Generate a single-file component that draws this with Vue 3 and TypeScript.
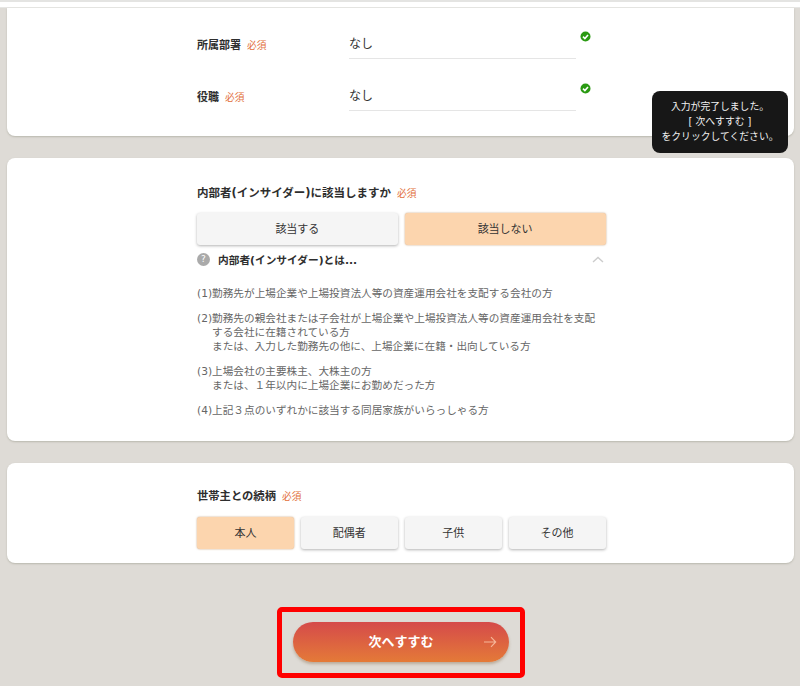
<script setup lang="ts">
const relations: { label: string; on: boolean }[] = [
  { label: '本人', on: true },
  { label: '配偶者', on: false },
  { label: '子供', on: false },
  { label: 'その他', on: false },
]
const fields: string[] = ['所属部署', '役職']
</script>

<template>
  <div class="page">
    <div class="topline"></div>
    <section class="card card-one">
      <div v-for="f in fields" :key="f" class="field">
        <div class="label"><b>{{ f }}</b><span class="req">必須</span></div>
        <div class="value">なし</div>
        <svg class="check" width="11" height="11" viewBox="0 0 11 11">
          <circle cx="5.5" cy="5.5" r="5" fill="#2a9a12" />
          <path d="M3 5.6 4.9 7.5 8 3.9" fill="none" stroke="#fff" stroke-width="1.6" />
        </svg>
      </div>
    </section>

    <div class="tip">入力が完了しました。<br />[ 次へすすむ ]<br />をクリックしてください。</div>

    <section class="card card-two">
      <div class="inner">
        <div class="heading"><b>内部者(インサイダー)に該当しますか</b><span class="req">必須</span></div>
        <div class="choices">
          <button class="choice">該当する</button>
          <button class="choice on">該当しない</button>
        </div>
        <div class="accordion">
          <span class="q">?</span>
          <b>内部者(インサイダー)とは...</b>
          <svg class="chev" width="12" height="7" viewBox="0 0 12 7">
            <path d="M1 6 6 1.5 11 6" fill="none" stroke="#ccc" stroke-width="1.4" />
          </svg>
        </div>
        <ol class="notes">
          <li>(1)勤務先が上場企業や上場投資法人等の資産運用会社を支配する会社の方</li>
          <li>(2)勤務先の親会社または子会社が上場企業や上場投資法人等の資産運用会社を支配<br /><span class="ind">する会社に在籍されている方</span><br /><span class="ind">または、入力した勤務先の他に、上場企業に在籍・出向している方</span></li>
          <li>(3)上場会社の主要株主、大株主の方<br /><span class="ind">または、１年以内に上場企業にお勤めだった方</span></li>
          <li>(4)上記３点のいずれかに該当する同居家族がいらっしゃる方</li>
        </ol>
      </div>
    </section>

    <section class="card card-three">
      <div class="inner">
        <div class="heading"><b>世帯主との続柄</b><span class="req">必須</span></div>
        <div class="choices">
          <button v-for="r in relations" :key="r.label" class="choice" :class="{ on: r.on }">{{ r.label }}</button>
        </div>
      </div>
    </section>

    <div class="cta">
      <div class="frame">
        <button class="next">
          <span>次へすすむ</span>
          <svg class="arrow" width="14" height="12" viewBox="0 0 14 12">
            <path d="M1 6H12.5M8 1.2 12.7 6 8 10.8" fill="none" stroke="#f6b79a" stroke-width="1.1" />
          </svg>
        </button>
      </div>
    </div>
  </div>
</template>

<style>
html, body { margin: 0; background: #dedbd6; }
</style>

<style scoped>
.page {
  position: relative;
  width: 800px;
  height: 686px;
  overflow: hidden;
  background: #dedbd6;
  font-family: "DejaVu Sans", "Noto Sans CJK JP", sans-serif;
  color: #333;
  font-size: 11px;
}
.topline {
  height: 8px;
  box-sizing: border-box;
  background: #fff;
  border-top: 2px solid #e4e4e2;
  border-bottom: 1px solid #e6e6e4;
}
.card {
  margin: 0 6px 0 7px;
  background: #fff;
  border-radius: 0 0 8px 8px;
  box-shadow: 0 1px 2px #b9b8ae;
}
.card-one { height: 128px; box-sizing: border-box; padding-top: 21px; }
.card-two { margin-top: 22px; height: 283px; border-radius: 8px; }
.card-three { margin-top: 22px; height: 100px; border-radius: 8px; }
.inner { width: 408.5px; margin-left: 190px; }
.field {
  position: relative;
  height: 52px;
  margin-left: 190px;
  display: flex;
}
.label { width: 152px; padding-top: 8px; line-height: 18px; }
b { font-weight: 700; color: #2e2e2e; }
.req { color: #e2703a; font-size: 9.7px; margin-left: 6px; font-weight: 400; }
.value {
  width: 227px;
  height: 30px;
  box-sizing: border-box;
  border-bottom: 1px solid #e5e5e5;
  font-size: 12px;
  line-height: 31px;
}
.check { position: absolute; left: 383px; top: 2px; }
.tip {
  position: absolute;
  left: 652px;
  top: 91px;
  width: 136px;
  height: 62px;
  box-sizing: border-box;
  padding-top: 8px;
  background: #171717;
  border-radius: 8px;
  color: #f2f2f2;
  text-align: center;
  font-size: 9.8px;
  line-height: 15px;
}
.heading { padding-top: 26px; line-height: 18px; font-size: 11.5px; }
.choices { display: flex; gap: 7px; margin-top: 10px; }
.card-three .heading { padding-top: 25px; font-size: 11.3px; }
.card-three .choices { margin-top: 11px; }
.choice {
  flex: 1;
  height: 32px;
  padding: 0 0 3px;
  border: 0;
  border-radius: 3px;
  background: #f5f5f5;
  box-shadow: 0 1px 3px rgba(0, 0, 0, 0.3);
  font: inherit;
  color: #333;
}
.choice.on {
  background: #fcd5ae;
  box-shadow: 0 0 2px rgba(170, 110, 50, 0.7);
}
.accordion {
  position: relative;
  display: flex;
  align-items: center;
  height: 18px;
  margin-top: 5px;
  font-size: 10.7px;
}
.q {
  width: 13px;
  height: 13px;
  border-radius: 50%;
  background: #aaa;
  color: #fff;
  font-size: 9px;
  line-height: 13px;
  text-align: center;
  margin-right: 8px;
}
.chev { position: absolute; right: 2px; top: 6px; }
.notes { list-style: none; margin: 19px 0 0; padding: 0; color: #666; font-size: 10.65px; line-height: 14px; }
.notes li { margin-bottom: 11px; white-space: nowrap; }
.ind { padding-left: 15px; }
.cta { display: flex; justify-content: center; margin-top: 44px; }
.frame {
  width: 248px;
  height: 71px;
  box-sizing: border-box;
  border: 5px solid #f00;
  border-radius: 5px;
  padding: 10px 11px;
  margin-left: 2px;
}
.next {
  position: relative;
  width: 216px;
  height: 40px;
  border: 0;
  border-radius: 20px;
  background: linear-gradient(#d54a4a, #e47a38);
  box-shadow: 0 2px 3px rgba(120, 80, 40, 0.35);
  color: #fff;
  font: inherit;
  font-size: 13px;
  font-weight: 700;
  padding: 0 0 3px;
}
.arrow { position: absolute; right: 12px; top: 14px; }
</style>
